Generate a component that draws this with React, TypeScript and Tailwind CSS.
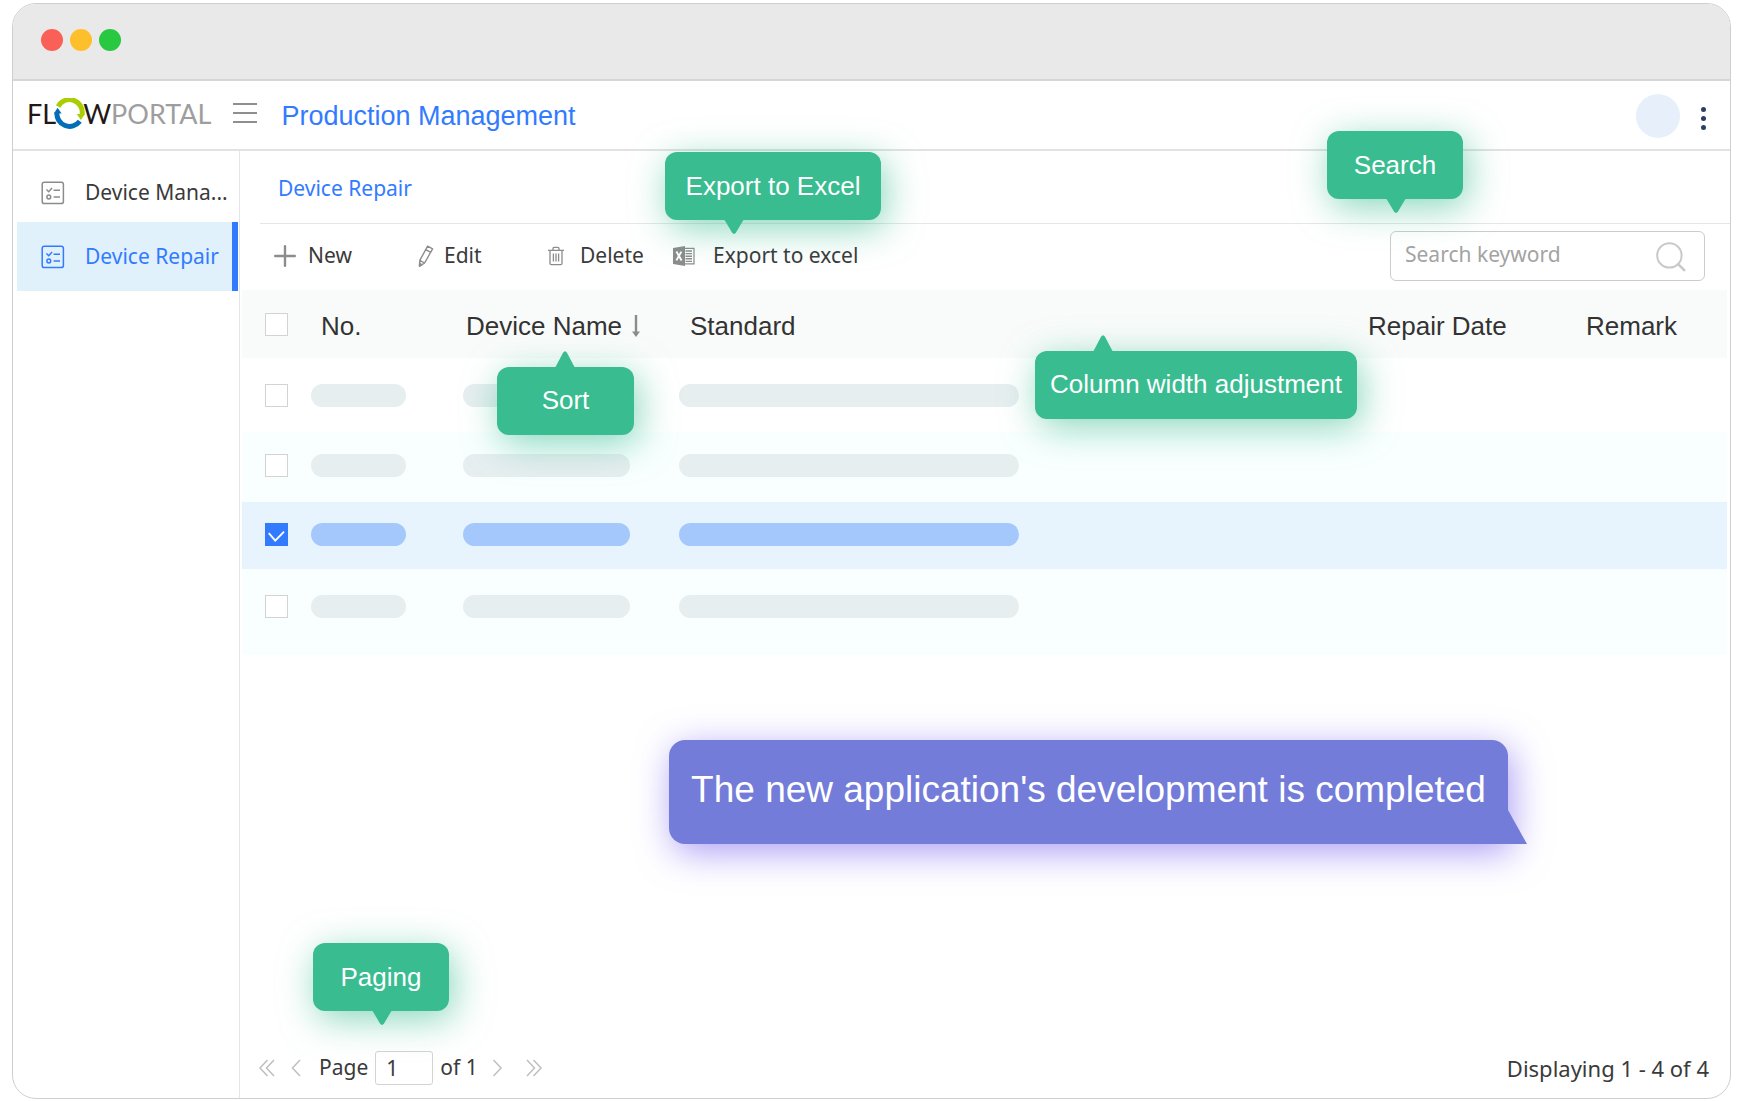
import type { ReactNode } from "react";
import clsx from "clsx";

const UI_FONT = "font-['Noto_Sans','Open_Sans',sans-serif]";
const HEADING_FONT = "font-['Liberation_Sans',Arial,sans-serif]";

const ROWS = [
  { id: 1, checked: false, className: "h-[74px] bg-white", inner: "" },
  { id: 2, checked: false, className: "h-[70px] bg-[#f9ffff]", inner: "pb-1" },
  { id: 3, checked: true, className: "h-[67px] bg-[#e7f4fd]", inner: "pb-0.5" },
  { id: 4, checked: false, className: "h-[86px] bg-[#f9ffff]", inner: "pb-3" },
];

function Logo() {
  return (
    <a
      href="#"
      aria-label="FlowPortal home"
      className="flex items-center font-['Lato',sans-serif] text-[27px] leading-none text-[#231815]"
    >
      <span>FL</span>
      <svg viewBox="0 0 30 30" className="-ml-0.5 size-[31px]" aria-hidden="true">
        <path d="M4 8.2A12.4 12.4 0 0 1 27.2 16" fill="none" stroke="#aacd03" strokeWidth="4.8" />
        <path d="M22 15.4h8l-4 6z" fill="#aacd03" />
        <path d="M25 22.6A12.4 12.4 0 0 1 2.8 14" fill="none" stroke="#036eb8" strokeWidth="4.8" />
        <path d="M0 15h7.400L3.400 9.400z" fill="#036eb8" />
      </svg>
      <span className="-ml-0.5">W</span>
      <span className="text-[#9e9e9f]">PORTAL</span>
    </a>
  );
}

function FormIcon() {
  return (
    <svg viewBox="0 0 24 24" className="size-6 shrink-0" fill="none" stroke="currentColor" strokeWidth="1.5" aria-hidden="true">
      <rect x="1.2" y="1.2" width="21.2" height="21.4" rx="2.2" />
      <path d="M5.5 8.5l2.2 2.2 3.4-3.6M12.6 9.2h6.4M12.6 16h6.4" />
      <circle cx="7.8" cy="16" r="1.9" />
    </svg>
  );
}

function PlusIcon() {
  return (
    <svg viewBox="0 0 22 22" className="size-[22px]" stroke="#8c8c8c" strokeWidth="2.4" strokeLinecap="round" aria-hidden="true">
      <path d="M11 1.2v19.6M1.2 11h19.6" />
    </svg>
  );
}

function PencilIcon() {
  return (
    <svg viewBox="0 0 16 22" className="h-[22px] w-4" fill="none" stroke="#8c8c8c" strokeWidth="1.4" strokeLinejoin="round" aria-hidden="true">
      <path d="M9.6 1.2l5 2.6-8 14.2-5 3.2.2-5.8zM7.8 4.6l4.8 2.7M1.8 15.4l4.8 2.6" />
      <path d="M1.4 21.2l.2-2.8 2.2 1.2z" fill="#8c8c8c" />
    </svg>
  );
}

function TrashIcon() {
  return (
    <svg viewBox="0 0 16 20" className="h-5 w-4" fill="none" stroke="#8c8c8c" strokeWidth="1.3" aria-hidden="true">
      <path d="M0 4.4h16M5 4.2V2.6c0-.8.4-1.2 1.2-1.2h3.6c.8 0 1.2.4 1.2 1.2v1.6M2 4.6v12.6c0 .9.5 1.4 1.4 1.4h9.2c.9 0 1.4-.5 1.4-1.4V4.6M5.4 7.6v8M8 7.6v8M10.6 7.6v8" />
    </svg>
  );
}

function ExcelIcon() {
  return (
    <svg viewBox="0 0 22 20" className="h-5 w-[22px]" aria-hidden="true">
      <path d="M12 2.4h9v15.4h-9" fill="none" stroke="#8c8c8c" strokeWidth="1.2" />
      <path d="M12.5 5h6.5M12.5 7.6h6.5M12.5 10.2h6.5M12.5 12.8h6.5M12.5 15.4h6.5" stroke="#8c8c8c" strokeWidth="1.4" />
      <path d="M0 2L12 0v20L0 18z" fill="#8c8c8c" />
      <path d="M3.4 5.6l5.2 8.8M8.4 5.6l-5 8.8" stroke="#fff" strokeWidth="1.9" />
    </svg>
  );
}

function Callout({
  children,
  className,
  pointer,
  up = false,
}: {
  children: ReactNode;
  className: string;
  pointer: string;
  up?: boolean;
}) {
  return (
    <div
      role="tooltip"
      className={clsx(
        "absolute z-10 flex h-[68px] items-center justify-center rounded-xl bg-[#38bc90] text-[26px] whitespace-nowrap text-white shadow-[4px_8px_36px_rgba(56,188,144,0.6)]",
        HEADING_FONT,
        className
      )}
    >
      {children}
      <svg
        viewBox="0 0 20 16"
        preserveAspectRatio="none"
        className={clsx("absolute w-5", up ? "bottom-full -mb-px h-[18px] rotate-180" : "top-full -mt-px h-4", pointer)}
        fill="#38bc90"
        aria-hidden="true"
      >
        <path d="M0 0h20l-8 13.600q-2 2.800-4 0z" />
      </svg>
    </div>
  );
}

function CheckBox({ label, checked = false }: { label: string; checked?: boolean }) {
  return (
    <label className="relative block size-[23px]">
      <input
        type="checkbox"
        aria-label={label}
        defaultChecked={checked}
        className="peer block size-[23px] appearance-none border border-[#d3d3d3] bg-white checked:border-[#327bff] checked:bg-[#327bff]"
      />
      <svg
        viewBox="0 0 22 22"
        className="pointer-events-none absolute inset-0 hidden peer-checked:block"
        fill="none"
        stroke="#fff"
        strokeWidth="1.8"
        aria-hidden="true"
      >
        <path d="M3.6 9.8l6.2 7 8.4-8.6" />
      </svg>
    </label>
  );
}

function Pill({ className, active }: { className: string; active: boolean }) {
  return (
    <div className={clsx("h-[23px] rounded-full", active ? "bg-[#a5c8fc]" : "bg-[#e7eef0]", className)} />
  );
}

function PageArrow({ label, d, className }: { label: string; d: string; className?: string }) {
  return (
    <button type="button" aria-label={label} className={className}>
      <svg viewBox="0 0 16 18" className="h-[18px] w-4" fill="none" stroke="#bfbfbf" strokeWidth="1.5" aria-hidden="true">
        <path d={d} />
      </svg>
    </button>
  );
}

export default function App() {
  return (
    <div className={clsx("flex min-h-screen flex-col bg-white px-3 pt-[3px] pb-0.5 text-[#3a3a3a]", UI_FONT)}>
      <div className="flex flex-1 flex-col rounded-3xl border border-[#cfcfcf]">
        {/* Title bar */}
        <div className="flex h-[77px] items-center gap-[7px] rounded-t-[23px] border-b-2 border-[#d6d6d6] bg-[#e9e9e9] pb-1 pl-7">
          <span className="size-[22px] rounded-full bg-[#fa6058]" />
          <span className="size-[22px] rounded-full bg-[#fdc02c]" />
          <span className="size-[22px] rounded-full bg-[#28c840]" />
        </div>

        {/* App header */}
        <header className="flex h-[70px] items-center border-b-2 border-[#e2e2e2] pt-0.5 pr-6 pl-3.5">
          <div className="flex items-center gap-[22px] pb-1.5">
            <Logo />
            <button type="button" aria-label="Toggle menu" className="flex w-6 flex-col gap-[7px]">
              <span className="h-0.5 w-full bg-[#8f8f8f]" />
              <span className="h-0.5 w-full bg-[#8f8f8f]" />
              <span className="h-0.5 w-full bg-[#8f8f8f]" />
            </button>
          </div>
          <h1 className={clsx("ml-6 text-[27px] text-[#327bff]", HEADING_FONT)}>Production Management</h1>
          <span className="ml-auto size-11 rounded-full bg-[#e7f0fa]" />
          <button type="button" aria-label="More" className="mt-1 ml-[21px] flex flex-col gap-1">
            <span className="size-[5px] rounded-full bg-[#2c3f63]" />
            <span className="size-[5px] rounded-full bg-[#2c3f63]" />
            <span className="size-[5px] rounded-full bg-[#2c3f63]" />
          </button>
        </header>

        <div className="flex flex-1">
          {/* Sidebar */}
          <nav className="w-[227px] shrink-0 border-r border-[#e6e6e6] pt-[15px] pr-px pl-1 text-[21px]">
            <a href="#" className="flex h-14 items-center gap-5 pb-0.5 pl-6">
              <span className="text-[#8c8c8c]">
                <FormIcon />
              </span>
              <span className="whitespace-nowrap">Device Mana...</span>
            </a>
            <a
              href="#"
              aria-current="page"
              className="flex h-[69px] items-center gap-5 border-r-[6px] border-[#327bff] bg-[#e0f1fc] pl-6 text-[#327bff]"
            >
              <FormIcon />
              <span className="whitespace-nowrap">Device Repair</span>
            </a>
          </nav>

          <main className="flex min-w-0 flex-1 flex-col">
            <div className="ml-5 flex h-[73px] items-center border-b border-[#e6e6e6] pt-1 pl-[18px]">
              <a href="#" className="text-[21px] text-[#327bff]">Device Repair</a>
            </div>

            {/* Toolbar */}
            <div className="flex h-[66px] items-center pr-[25px] pb-0.5 pl-[34px] text-[21px]">
              <button type="button" className="flex w-36 items-center gap-3">
                <PlusIcon />
                New
              </button>
              <button type="button" className="flex w-[130px] items-center gap-2.5">
                <PencilIcon />
                Edit
              </button>
              <button type="button" className="flex w-[125px] items-center gap-4">
                <TrashIcon />
                Delete
              </button>
              <div className="relative">
                <button type="button" className="flex items-center gap-[18px] whitespace-nowrap">
                  <ExcelIcon />
                  Export to excel
                </button>
                <Callout className="bottom-full -left-2 mb-5 w-[216px]" pointer="left-[59px]">
                  Export to Excel
                </Callout>
              </div>

              <div className="relative ml-auto">
                <label className="flex h-[50px] w-[315px] items-center rounded-md border border-[#cccccc] pr-[18px] pl-3.5">
                  <input
                    type="search"
                    aria-label="Search keyword"
                    placeholder="Search keyword"
                    className="min-w-0 flex-1 bg-transparent pb-0.5 outline-none placeholder:text-[#a3a3a3]"
                  />
                  <svg viewBox="0 0 30 30" className="mt-0.5 size-[30px]" fill="none" stroke="#c9c9c9" strokeWidth="2" strokeLinecap="round" aria-hidden="true">
                    <circle cx="13.4" cy="13.4" r="12.2" />
                    <path d="M22.4 22.4l5.8 5.8" strokeWidth="2.6" />
                  </svg>
                </label>
                <Callout className="right-[242px] bottom-full mb-8 w-[136px]" pointer="left-[59px]">
                  Search
                </Callout>
              </div>
            </div>

            {/* Records */}
            <table className="mr-[3px] ml-0.5 table-fixed border-collapse text-left">
              <colgroup>
                <col className="w-[69px]" />
                <col className="w-[152px]" />
                <col className="w-[216px]" />
                <col />
                <col className="w-[218px]" />
                <col className="w-[152px]" />
              </colgroup>
              <thead>
                <tr className={clsx("h-[68px] bg-[#f9fbfa] text-[26px] whitespace-nowrap text-[#333333]", HEADING_FONT)}>
                  <th className="pl-[23px] font-normal">
                    <CheckBox label="Select all" />
                  </th>
                  <th className="pt-1 pl-2.5 font-normal">No.</th>
                  <th className="pt-1 pl-[3px] font-normal">
                    <div className="relative flex w-[184px] items-center gap-2.5">
                      Device Name
                      <svg viewBox="0 0 8 22" className="h-[22px] w-2" fill="#8c8c8c" aria-hidden="true">
                        <path d="M2.8 0h2.4v16.4H8L4 22 0 16.4h2.8z" />
                      </svg>
                      <Callout className="top-full left-[31px] mt-[21px] w-[137px]" pointer="left-[58px]" up>
                        Sort
                      </Callout>
                    </div>
                  </th>
                  <th className="pt-1 pl-[11px] font-normal">
                    <div className="relative">
                      Standard
                      <Callout className="top-full right-0 mt-[5px] w-[322px]" pointer="left-[58px]" up>
                        Column width adjustment
                      </Callout>
                    </div>
                  </th>
                  <th className="pt-1 pl-[11px] font-normal">Repair Date</th>
                  <th className="pt-1 pl-[11px] font-normal">Remark</th>
                </tr>
              </thead>
              <tbody>
                {ROWS.map((row) => (
                  <tr key={row.id} className={row.className}>
                    <td className={clsx("pl-[23px]", row.inner)}>
                      <CheckBox label={`Select row ${row.id}`} checked={row.checked} />
                    </td>
                    <td className={row.inner}>
                      <Pill className="w-[95px]" active={row.checked} />
                    </td>
                    <td className={row.inner}>
                      <Pill className="w-[167px]" active={row.checked} />
                    </td>
                    <td className={row.inner}>
                      <Pill className="w-[340px] max-w-full" active={row.checked} />
                    </td>
                    <td />
                    <td />
                  </tr>
                ))}
              </tbody>
            </table>

            {/* Completion message */}
            <div className="mt-[85px] mr-[222px] ml-auto">
              <div
                className={clsx(
                  "relative flex h-[104px] w-[839px] items-center justify-center rounded-l-2xl rounded-tr-2xl bg-[#747cd9] pb-1 text-[37px] whitespace-nowrap text-white shadow-[4px_8px_36px_rgba(116,92,240,0.6)]",
                  HEADING_FONT
                )}
              >
                The new application's development is completed
                <svg viewBox="0 0 20 34" className="absolute bottom-0 left-full -ml-px h-[34px] w-5" fill="#747cd9" aria-hidden="true">
                  <path d="M0 0h1l19 34H0z" />
                </svg>
              </div>
            </div>

            {/* Paging */}
            <footer className="mt-auto flex h-[60px] items-center pr-[21px] pl-[19px] text-[21px]">
              <PageArrow label="First page" d="M8.5 1L1 9l7.500 8M15 1L7.500 9l7.500 8" />
              <PageArrow label="Previous page" d="M11 1L3.500 9l7.500 8" className="ml-3.5" />
              <div className="relative ml-3.5 flex items-center">
                <label htmlFor="page">Page</label>
                <input
                  id="page"
                  defaultValue="1"
                  className="mx-[7px] h-[34px] w-[58px] rounded-[3px] border border-[#d3d3d3] bg-white pl-2.5 outline-none"
                />
                <span>of 1</span>
                <Callout className="bottom-full -left-1.5 mb-10 w-[136px]" pointer="left-[59px]">
                  Paging
                </Callout>
              </div>
              <PageArrow label="Next page" d="M3.500 1L11 9l-7.500 8" className="ml-3" />
              <PageArrow label="Last page" d="M1 1l7.500 8L1 17M7.500 1L15 9l-7.500 8" className="ml-5" />
              <span className="ml-auto text-[22px]">Displaying 1 - 4 of 4</span>
            </footer>
          </main>
        </div>
      </div>
    </div>
  );
}
